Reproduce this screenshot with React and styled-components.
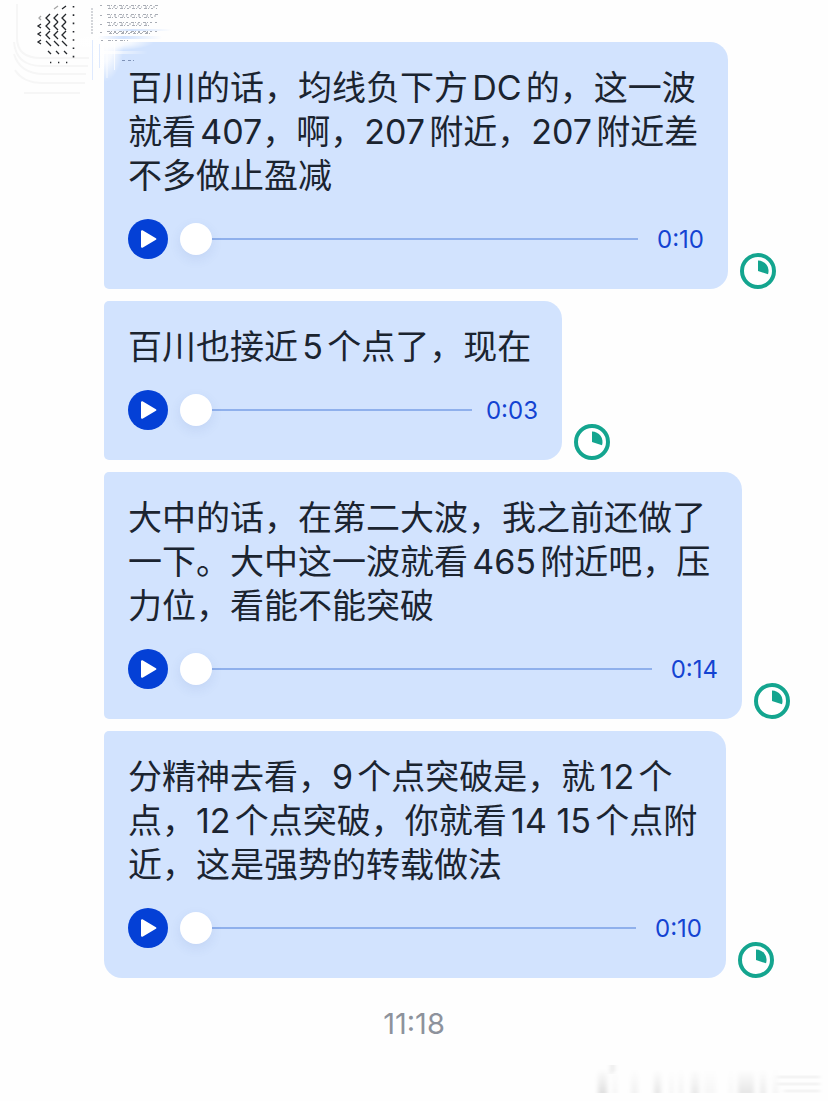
import React from "react";
import styled, { createGlobalStyle } from "styled-components";

const messages = [
  { id: 1, time: "0:10", width: 624, lines: ["百川的话，均线负下方DC的，这一波", "就看407，啊，207附近，207附近差", "不多做止盈减"] },
  { id: 2, time: "0:03", width: 458, lines: ["百川也接近5个点了，现在"] },
  { id: 3, time: "0:14", width: 638, lines: ["大中的话，在第二大波，我之前还做了", "一下。大中这一波就看465附近吧，压", "力位，看能不能突破"] },
  { id: 4, time: "0:10", width: 622, lines: ["分精神去看，9个点突破是，就12个", "点，12个点突破，你就看14 15个点附", "近，这是强势的转载做法"] },
];

const VoiceMessage = ({ message }) => (
  <Row>
    <Bubble $width={message.width}>
      <Text>
        {message.lines.map((line) => <Line key={line}>{line}</Line>)}
      </Text>
      <Player>
        <PlayButton type="button" aria-label="播放">
          <svg width="40" height="40" viewBox="0 0 40 40">
            <path d="M14 12.2v15.6L27.4 20z" fill="#fff" stroke="#fff" strokeWidth="2" strokeLinejoin="round" />
          </svg>
        </PlayButton>
        <Slider type="range" min="0" max="100" defaultValue="0" aria-label="播放进度" />
        <Duration>{message.time}</Duration>
      </Player>
    </Bubble>
    <Status width="36" height="36" viewBox="0 0 36 36">
      <circle cx="18" cy="18" r="16" fill="#fff" stroke="#14a58f" strokeWidth="4" />
      <path d="M18 18V7.5A10.5 10.5 0 0 1 28 21.3z" fill="#14a58f" />
    </Status>
  </Row>
);

const chevrons = [
  [46, 17], [54, 17], [62, 17],
  [46, 25], [54, 25], [62, 25],
  [46, 34], [54, 34], [62, 34],
];

// worn stamp in the top left corner
const CornerMark = () => (
  <TopMark width="190" height="100" viewBox="0 0 190 100" aria-hidden="true">
    <defs>
      <radialGradient id="haze">
        <stop offset="0" stopColor="#fff" />
        <stop offset="0.5" stopColor="#fff" stopOpacity="0.8" />
        <stop offset="1" stopColor="#fff" stopOpacity="0" />
      </radialGradient>
      <linearGradient id="streak">
        <stop offset="0" stopColor="#fff" />
        <stop offset="1" stopColor="#fff" stopOpacity="0" />
      </linearGradient>
      <linearGradient id="blueStreak">
        <stop offset="0" stopColor="#d2e3fe" stopOpacity="0" />
        <stop offset="0.4" stopColor="#d2e3fe" />
        <stop offset="1" stopColor="#d2e3fe" stopOpacity="0" />
      </linearGradient>
    </defs>
    <ellipse cx="104" cy="42" rx="20" ry="40" fill="url(#haze)" />
    <ellipse cx="106" cy="42" rx="48" ry="9" fill="url(#haze)" />
    <rect x="100" y="51" width="48" height="3" fill="url(#streak)" />
    <rect x="106" y="29" width="66" height="2" fill="url(#blueStreak)" />
    <rect x="98" y="36" width="64" height="3" fill="url(#blueStreak)" />
    <path d="M92.5 40v40M99.5 44v24" stroke="#dfeafe" fill="none" />
    <path d="M107 42v36M114.500 42v28" stroke="#fff" strokeOpacity="0.7" fill="none" />
    <g fill="none" stroke="#f6f6f6" strokeWidth="2">
      <path d="M17 4v34q0 20 24 20h48" />
      <path d="M14 42q2 24 28 24h46" />
      <path d="M14 54q6 20 30 20h42" />
      <path d="M15 70q8 13 28 13h42" />
      <path d="M24 93h56" />
    </g>
    <g fill="none" stroke="#24272b" strokeWidth="1.3">
      {chevrons.map(([x, y]) => (
        <path key={`${x}-${y}`} d={`M${x + 4} ${y - 3}l-4 4 4 4`} />
      ))}
      <path d="M46 41l5 5M54 41l5 5M62 41l5 5M48 51l3 3M56 51l3 3M64 51l3 3" />
      <path d="M41 24l-3 2 3 2M41 32l-3 2 3 2M41 40l-3 2 3 2M62 9l4-3" />
      <path d="M54 9l4-3M41 16l-2 2 2 2" stroke="#a5a5a5" />
    </g>
    <path d="M73.500 6v58" stroke="#24272b" strokeWidth="1.600" strokeDasharray="1.6 6.700" />
    <path d="M50 62.500h18" stroke="#24272b" strokeWidth="1.300" strokeDasharray="1.300 6.700" />
    <g stroke="#a9adb5" strokeWidth="1" fill="none">
      <path d="M100 5.500h3M100 15.500h3M100 24.500h3M100 32.500h3M101 40.500h2M92 8v26" strokeDasharray="2 1" />
      <path d="M107 5.500h51M108 8.500h49M107 14.500h51M108 17.500h48M107 22.500h50M108 25.500h43M107 31.500h50M109 33.500h42M108 40.500h20" strokeDasharray="3 1 1 2 2 3" />
      <path d="M109 7h48M110 16h46M109 24h40M110 32.500h40" strokeDasharray="1 3 2 2" />
    </g>
    <path d="M122 60.500h3M128 60.500h6" stroke="#7f93b8" strokeDasharray="3 2" />
  </TopMark>
);

const bars = [
  [8, 9, 0.12], [23, 4, 0.04], [41, 7, 0.05], [64, 7, 0.09], [80, 3, 0.05], [89, 4, 0.05],
  [101, 8, 0.08], [114, 12, 0.03], [139, 4, 0.03], [148, 16, 0.09], [170, 6, 0.07], [183, 5, 0.04],
];

// faded signature strip in the bottom right corner
const FootMark = () => (
  <BottomMark width="238" height="41" viewBox="0 0 238 41" aria-hidden="true">
    <defs>
      <linearGradient id="fade" x2="0" y2="1">
        <stop offset="0" stopOpacity="0" />
        <stop offset="1" />
      </linearGradient>
      <filter id="soften">
        <feGaussianBlur stdDeviation="2 0" />
      </filter>
    </defs>
    <g filter="url(#soften)">
      {bars.map(([x, w, o]) => (
        <rect key={x} x={x} y="9" width={w} height="24" fill="url(#fade)" opacity={o} />
      ))}
      <path d="M20 5h5v5l-3 4h-2z" opacity="0.07" />
      <path d="M188 17h42M188 24h42M194 31h36" stroke="#000" strokeWidth="3" opacity="0.04" />
    </g>
  </BottomMark>
);

const App = () => (
  <Page>
    <GlobalStyle />
    <List>
      {messages.map((m) => <VoiceMessage key={m.id} message={m} />)}
    </List>
    <Stamp>11:18</Stamp>
    <CornerMark />
    <FootMark />
  </Page>
);

const GlobalStyle = createGlobalStyle`
  * {
    box-sizing: border-box;
  }
  body {
    margin: 0;
    background: #fefefe;
    font-family: Inter, "Noto Sans CJK SC", sans-serif;
  }
`;

const Page = styled.main`
  position: relative;
  min-height: 100vh;
  padding-top: 42px;
  overflow: hidden;
`;

const List = styled.ul`
  display: flex;
  flex-direction: column;
  gap: 12px;
  margin: 0;
  padding: 0 12px 0 104px;
  list-style: none;
`;

const Row = styled.li`
  display: flex;
  align-items: flex-end;
  gap: 12px;
`;

const Bubble = styled.div`
  flex: 0 1 ${(props) => props.$width}px;
  padding: 24px 24px 30px;
  background: #d2e3fe;
  border-radius: 5px 18px 18px 5px;
  ${Row}:last-child & {
    border-bottom-left-radius: 18px;
  }
`;

const Text = styled.p`
  margin: 0 0 21px;
  color: #1b2430;
  font-size: 34px;
  line-height: 44px;
  text-autospace: normal;
`;

const Line = styled.span`
  display: block;
  white-space: nowrap;
`;

const Player = styled.div`
  display: flex;
  align-items: center;
`;

const PlayButton = styled.button`
  flex: none;
  width: 40px;
  height: 40px;
  margin-right: 12px;
  padding: 0;
  border: 0;
  border-radius: 50%;
  background: #0440d6;
`;

const Slider = styled.input`
  appearance: none;
  flex: 1;
  min-width: 0;
  height: 32px;
  margin: 0;
  background: linear-gradient(#8fb0ec, #8fb0ec) center / 100% 2px no-repeat;
  &::-webkit-slider-thumb {
    appearance: none;
    width: 32px;
    height: 32px;
    border-radius: 50%;
    background: #fff;
    box-shadow: 0 4px 12px rgba(60, 90, 160, 0.1);
  }
`;

const Duration = styled.span`
  width: 66px;
  padding-top: 2px;
  color: #1443d2;
  font-size: 24px;
  line-height: 38px;
  text-align: right;
`;

const Status = styled.svg`
  flex: none;
`;

const Stamp = styled.time`
  display: block;
  margin-top: 28px;
  color: #8d929c;
  font-size: 29px;
  line-height: 36px;
  text-align: center;
`;

const TopMark = styled.svg`
  position: absolute;
  top: 0;
  left: 0;
  pointer-events: none;
`;

const BottomMark = styled.svg`
  position: absolute;
  right: 0;
  bottom: 0;
  pointer-events: none;
`;

export default App;
